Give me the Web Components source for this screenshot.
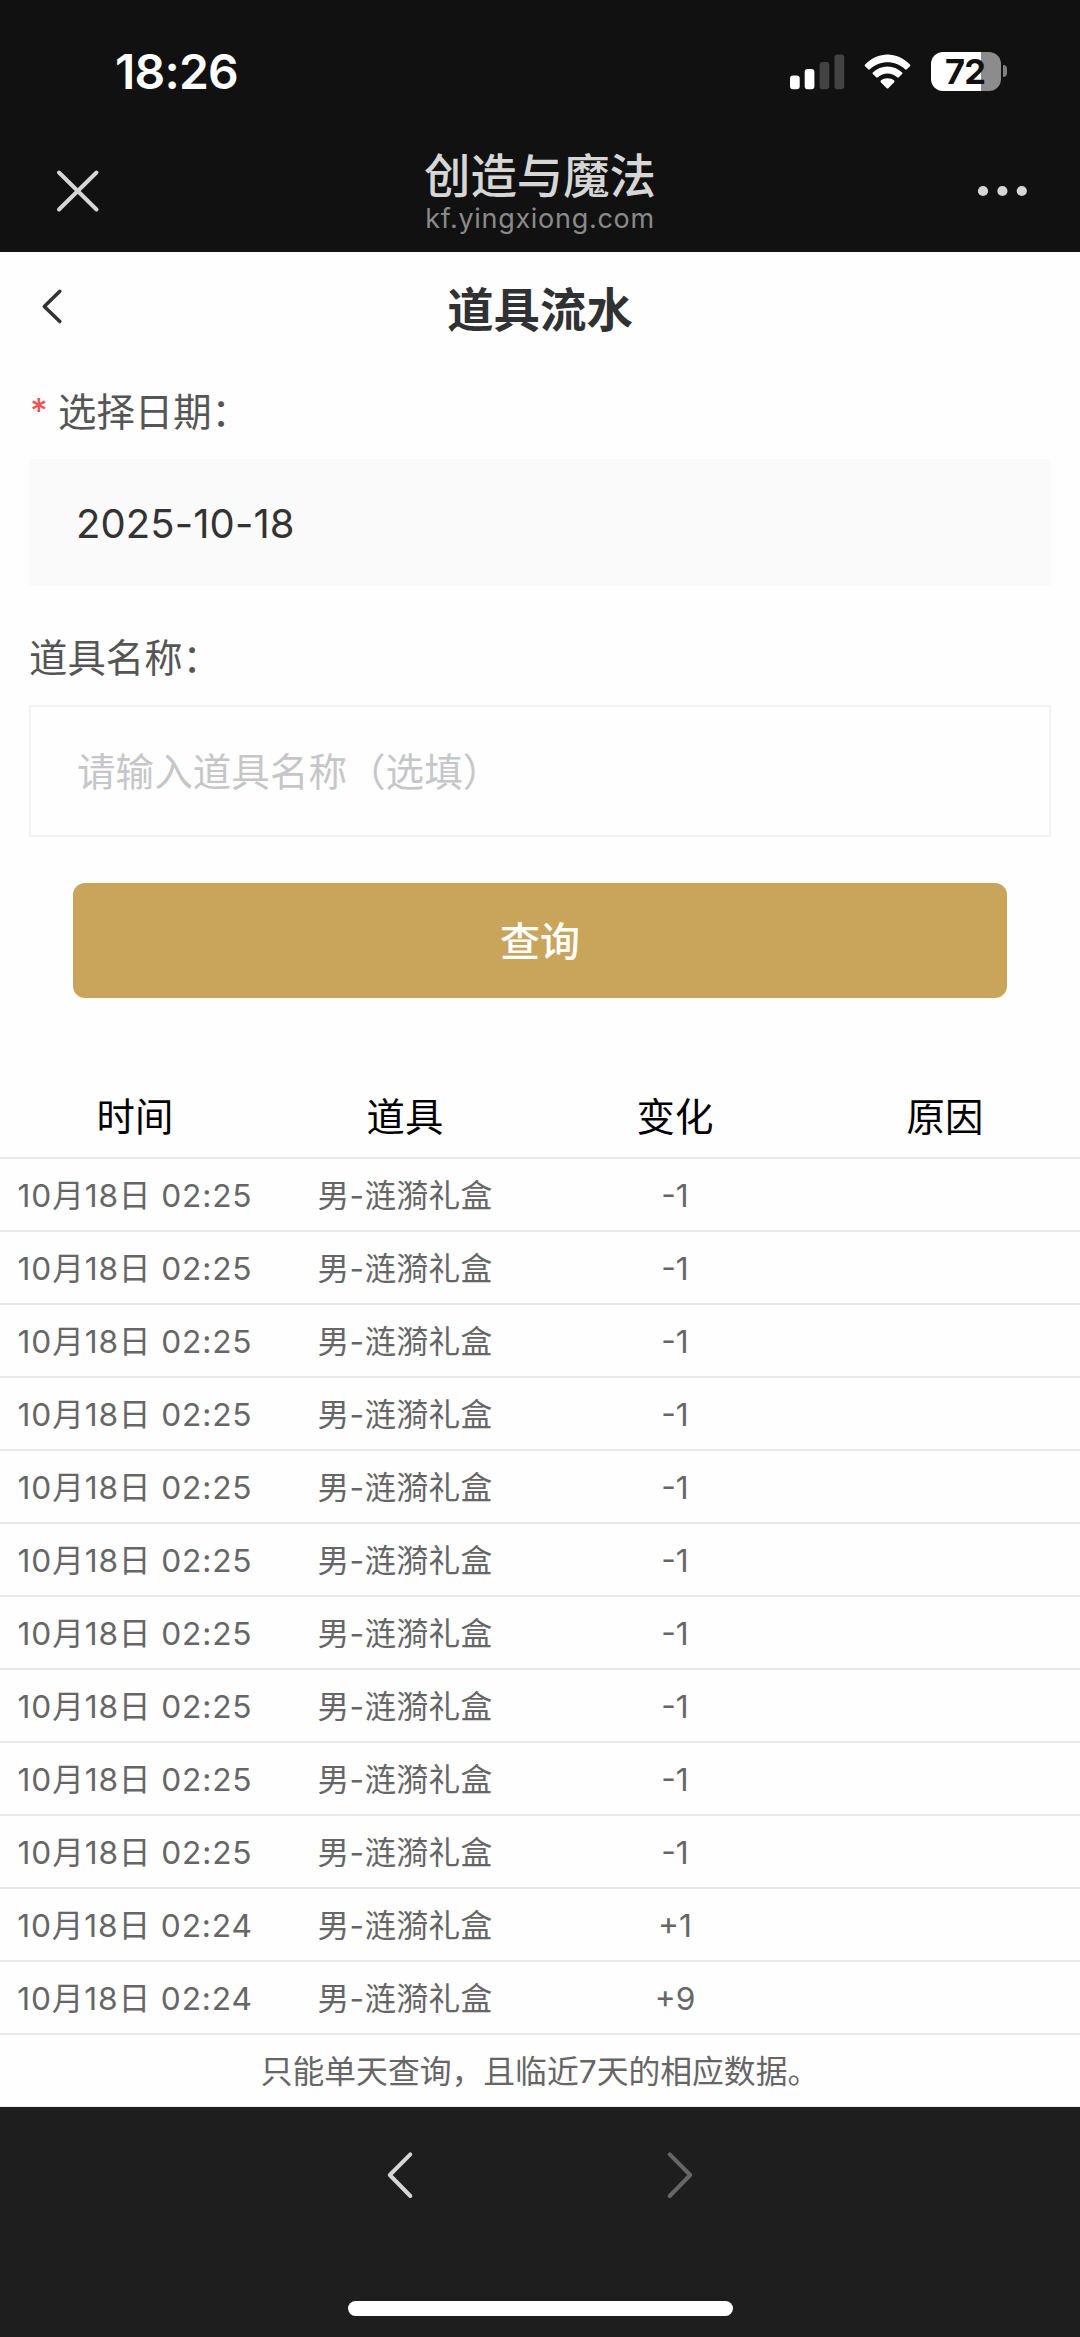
<!DOCTYPE html>
<html lang="zh-CN">
<head>
<meta charset="utf-8">
<title>道具流水</title>
<style>
html,body{margin:0;padding:0}
body{width:1080px;height:2337px;overflow:hidden;background:#fff;font-family:Inter,"Noto Sans CJK SC",sans-serif}
</style>
</head>
<body>
<phone-screen>
  <status-bar time="18:26" battery="72"></status-bar>
  <browser-bar host="kf.yingxiong.com">创造与魔法</browser-bar>
  <page-header>道具流水</page-header>
  <form-field kind="filled" required label="选择日期：">2025-10-18</form-field>
  <form-field kind="outlined" label="道具名称：">请输入道具名称（选填）</form-field>
  <query-button>查询</query-button>
  <record-table></record-table>
  <page-note>只能单天查询，且临近7天的相应数据。</page-note>
  <browser-toolbar></browser-toolbar>
</phone-screen>
<script>
function define(name, html, setup) {
  const tpl = document.createElement('template');
  tpl.innerHTML = html;
  customElements.define(name, class extends HTMLElement {
    constructor() {
      super();
      this.attachShadow({mode: 'open'}).appendChild(tpl.content.cloneNode(true));
    }
    connectedCallback() { if (setup) setup(this, this.shadowRoot); }
  });
}

define('phone-screen', `<style>
:host{display:flex;flex-direction:column;width:1080px;height:2337px;background:#fefefe}
</style><slot></slot>`);

define('status-bar', `<style>
:host{display:flex;box-sizing:border-box;height:130px;padding:0 73px 0 115px;background:#111;color:#fff;justify-content:space-between;align-items:flex-start}
.time{margin-top:41px;font-size:48px;line-height:62px;font-weight:600;letter-spacing:-.8px}
.icons{display:flex;margin-top:50px}
svg{display:block}
.battery{display:flex;align-items:center;margin-left:19px;height:42px}
.cell{width:70px;height:39px;border-radius:12px;background:linear-gradient(90deg,#fff 50px,#8c8c8c 50px);color:#111;font-size:34.5px;line-height:40px;font-weight:700;text-align:center;box-sizing:border-box;padding-right:2px;letter-spacing:-.8px}
.nub{width:4px;height:12px;margin-left:2px;border-radius:0 5px 5px 0;background:#808080}
</style>
<span class="time"></span>
<div class="icons">
<svg width="122" height="42" viewBox="790 50 122 42">
<g fill="#fff"><rect x="790" y="75.5" width="9.7" height="13.7" rx="3"/><rect x="804.7" y="69" width="9.7" height="20.2" rx="3"/></g>
<g fill="#434343"><rect x="819.6" y="62" width="9.7" height="27.2" rx="3"/><rect x="834.5" y="54.5" width="9.7" height="34.7" rx="3"/></g>
<g fill="#fff" transform="translate(887.5 0)">
<path d="M-22.4 64.6Q-23.3 65.4-22.5 66.3L-19.3 69.3Q-18.4 70-17.5 69.2C-8 60 8 60 17.5 69.2Q18.4 70 19.3 69.3L22.5 66.3Q23.3 65.4 22.4 64.6C10 51 -10 51 -22.4 64.6Z"/>
<path d="M-14.7 72.6Q-15.4 73.3-14.6 74.1L-11.3 77.3Q-10.5 78-9.7 77.3C-4.3 72.2 4.3 72.2 9.7 77.3Q10.5 78 11.3 77.3L14.6 74.1Q15.4 73.3 14.7 72.6C6.5 64.4 -6.5 64.4 -14.7 72.6Z"/>
<path d="M-6.7 80.6Q-7.3 81.4-6.6 82.2L-.8 88.2Q0 89 .8 88.2L6.6 82.2Q7.3 81.4 6.7 80.6C3 77.5 -3 77.5 -6.7 80.6Z"/>
</g></svg>
<div class="battery"><div class="cell"></div><div class="nub"></div></div>
</div>`, (el, r) => {
  r.querySelector('.time').textContent = el.getAttribute('time');
  r.querySelector('.cell').textContent = el.getAttribute('battery');
});

define('browser-bar', `<style>
:host{display:flex;box-sizing:border-box;height:122px;padding:0 50px;background:#111;color:#d6d6d6;justify-content:space-between}
svg{display:block;margin-top:34px}
.mid{display:flex;flex-direction:column;align-items:center;padding-top:19px}
.title{font-size:46.4px;line-height:54px;font-weight:500}
.host{font-size:27px;line-height:32px;color:#8a8a8a;letter-spacing:.7px}
</style>
<svg width="56" height="54" viewBox="50 164 56 54" fill="none" stroke="#d6d6d6" stroke-width="4" stroke-linecap="round"><path d="M59 172.5 96.5 209.5M96.5 172.5 59 209.5"/></svg>
<div class="mid"><span class="title"><slot></slot></span><span class="host"></span></div>
<svg width="56" height="54" viewBox="974 164 56 54" fill="#d6d6d6"><circle cx="983" cy="191" r="5.1"/><circle cx="1002.4" cy="191" r="5.1"/><circle cx="1021.8" cy="191" r="5.1"/></svg>`,
(el, r) => { r.querySelector('.host').textContent = el.getAttribute('host'); });

define('page-header', `<style>
:host{display:grid;grid-template-columns:1fr auto 1fr;height:114px;align-items:center;color:#303133;font-size:46.4px;line-height:60px;font-weight:700}
svg{display:block;margin:-6px 0 0 36px}
span{padding-top:2px}
</style>
<svg width="32" height="44" viewBox="36 284 32 44" fill="none" stroke="#333" stroke-width="3.6" stroke-linecap="round" stroke-linejoin="round"><path d="M59.8 291.3 44.3 306.5 59.8 321.5"/></svg>
<span><slot></slot></span><i></i>`);

define('form-field', `<style>
:host{display:block;padding:0 29px}
.label{display:flex;align-items:center;box-sizing:border-box;height:75px;font-size:38.4px;color:#555;padding-top:17px;line-height:58px}
.star{display:none;color:#ee5257;font-size:34px;font-weight:500;width:29px;box-sizing:border-box;padding-left:1px}
:host([required]) .star{display:block;margin-top:-3px}
.box{box-sizing:border-box;display:flex;align-items:center}
:host([kind=filled]) .box{height:127px;margin-top:18px;padding:2px 47px 0;background:#fafafa;color:#333;font-size:40px;letter-spacing:.1px}
:host([kind=outlined]){margin-top:26px}
:host([kind=outlined]) .label{padding-top:16px}
:host([kind=outlined]) .box{height:132px;margin-top:18px;padding:0 46px 4px;border:2px solid #f3f3f3;color:#c6c6c9;font-size:38.6px}
</style>
<div class="label"><span class="star">*</span><span class="text"></span></div>
<div class="box"><span><slot></slot></span></div>`,
(el, r) => { r.querySelector('.text').textContent = el.getAttribute('label'); });

define('query-button', `<style>
:host{display:block;padding:46px 73px 0}
button{display:block;width:100%;height:115px;border:0;border-radius:12px;background:#c9a55b;color:#fff;font:500 40px/115px Inter,"Noto Sans CJK SC",sans-serif;padding:1px 0 0}
</style><button><slot></slot></button>`);

define('record-row', `<style>
:host{display:grid;grid-template-columns:repeat(4,270px);box-sizing:border-box;height:73px;border-bottom:2px solid #e8e8e8;text-align:center;color:#666;font-size:31.7px;line-height:73px;white-space:nowrap}
:host([head]){height:84px;color:#000;font-size:38.4px;line-height:84px}
::slotted(.time){letter-spacing:.85px}
::slotted(.item){letter-spacing:.35px}
</style><slot></slot>`);

define('record-table', `<style>:host{display:block;padding-top:77px}</style>`, (el, r) => {
  const columns = ['time', 'item', 'change', 'reason'];
  const add = (cells, head) => {
    const row = document.createElement('record-row');
    if (head) row.setAttribute('head', '');
    cells.forEach((c, i) => {
      const s = document.createElement('span');
      if (!head) s.className = columns[i];
      s.textContent = c;
      row.append(s);
    });
    r.append(row);
  };
  add(['时间', '道具', '变化', '原因'], true);
  for (let i = 0; i < 10; i++) add(['10月18日 02:25', '男-涟漪礼盒', '-1', '']);
  add(['10月18日 02:24', '男-涟漪礼盒', '+1', '']);
  add(['10月18日 02:24', '男-涟漪礼盒', '+9', '']);
});

define('page-note', `<style>
:host{display:block;box-sizing:border-box;height:72px;border-bottom:1px solid #eee;text-align:center;color:#666;font-size:31.8px;line-height:74px}
</style><slot></slot>`);

define('browser-toolbar', `<style>
:host{display:flex;flex-direction:column;align-items:center;justify-content:space-between;flex:1;background:#1e1e1e;box-sizing:border-box;padding:40px 0 21px}
.nav{display:flex;gap:240px}
svg{display:block}
.home{width:385px;height:15px;border-radius:8px;background:#fff}
</style>
<div class="nav">
<svg width="40" height="56" viewBox="380 2147 40 56" fill="none" stroke="#d6d6d6" stroke-width="4" stroke-linecap="round" stroke-linejoin="round"><path d="M410.3 2154.3 389.8 2175 410.3 2196"/></svg>
<svg width="40" height="56" viewBox="660 2147 40 56" fill="none" stroke="#666" stroke-width="4" stroke-linecap="round" stroke-linejoin="round"><path d="M669.7 2154.3 690.2 2175 669.7 2196"/></svg>
</div><div class="home"></div>`);
</script>
</body>
</html>
